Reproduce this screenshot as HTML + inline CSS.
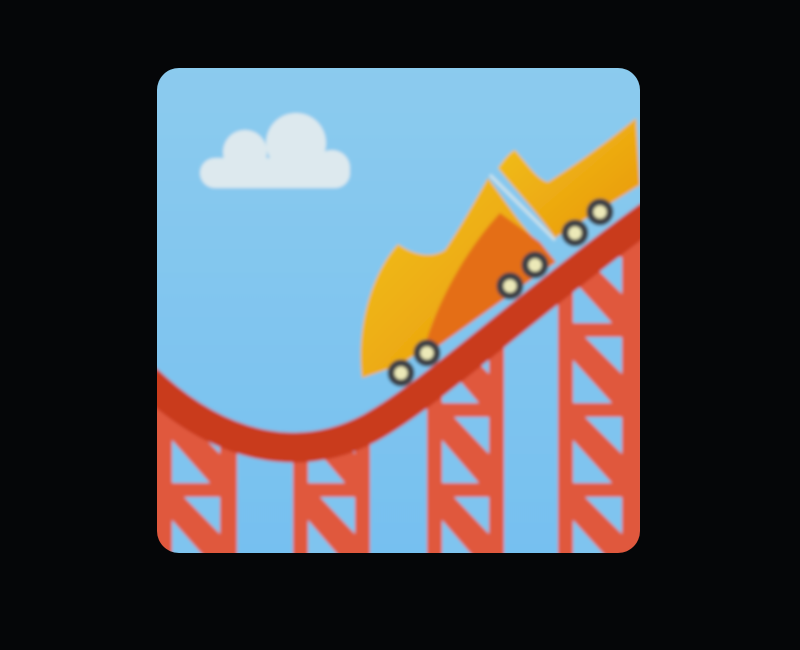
<!DOCTYPE html>
<html><head><style>html,body{margin:0;padding:0;background:#050608;width:800px;height:650px;overflow:hidden}</style></head>
<body>
<svg width="800" height="650" viewBox="0 0 800 650" xmlns="http://www.w3.org/2000/svg">
<defs>
<clipPath id="c"><rect x="157" y="68" width="483" height="485" rx="22"/></clipPath>
<clipPath id="below"><path d="M145,378 C220,450 300,465 370,428 C430,395 520,310 650,215 L660,570 L140,570 Z"/></clipPath>
<linearGradient id="sky" x1="0" y1="0" x2="0" y2="1"><stop offset="0" stop-color="#8ccbee"/><stop offset="1" stop-color="#76c0f0"/></linearGradient>
<linearGradient id="car" x1="0" y1="0" x2="1" y2="1"><stop offset="0" stop-color="#f2c21a"/><stop offset="1" stop-color="#e8960a"/></linearGradient>
<filter id="b"><feGaussianBlur stdDeviation="1.5"/></filter>
</defs>
<g clip-path="url(#c)" filter="url(#b)">
<rect x="150" y="60" width="500" height="500" fill="url(#sky)"/>
<!-- cloud -->
<g fill="#dde9ee">
<rect x="200" y="158" width="150" height="30" rx="15"/>
<circle cx="245" cy="152" r="22"/>
<circle cx="296" cy="143" r="30"/>
<circle cx="332" cy="168" r="18"/>
</g>
<!-- columns -->
<g clip-path="url(#below)">
<g fill="#e0583c">
<rect x="150" y="300" width="87" height="270"/>
<rect x="293" y="300" width="77" height="270"/>
<rect x="427" y="300" width="77" height="270"/>
<rect x="558" y="200" width="85" height="370"/>
</g>
<g fill="#7fc4ef">
<polygon points="184,337 220,337 220,374"/><polygon points="172,360 172,403 210,403"/>
<polygon points="184,417 220,417 220,454"/><polygon points="172,440 172,483 210,483"/>
<polygon points="184,497 220,497 220,534"/><polygon points="172,520 172,563 210,563"/>

<polygon points="320,417 355,417 355,454"/><polygon points="308,440 308,483 345,483"/>
<polygon points="320,497 355,497 355,534"/><polygon points="308,520 308,563 345,563"/>

<polygon points="454,337 489,337 489,374"/><polygon points="442,360 442,403 479,403"/>
<polygon points="454,417 489,417 489,454"/><polygon points="442,440 442,483 479,483"/>
<polygon points="454,497 489,497 489,534"/><polygon points="442,520 442,563 479,563"/>

<polygon points="585,257 622,257 622,294"/><polygon points="573,280 573,323 612,323"/>
<polygon points="585,337 622,337 622,374"/><polygon points="573,360 573,403 612,403"/>
<polygon points="585,417 622,417 622,454"/><polygon points="573,440 573,483 612,483"/>
<polygon points="585,497 622,497 622,534"/><polygon points="573,520 573,563 612,563"/>
</g>
</g>
<!-- track -->
<path d="M145,378 C220,450 300,465 370,428 C430,395 520,310 650,215" fill="none" stroke="#c93a1e" stroke-width="30"/>
<!-- lower car -->
<path d="M362,378 C356,330 370,275 398,244 C415,256 432,258 445,250 C462,225 478,195 488,178 C505,200 520,225 545,250 L555,262 L400,365 Z" fill="url(#car)"/>
<path d="M425,345 C440,295 470,245 500,213 L540,242 L556,262 L430,352 Z" fill="#e46e14"/>
<!-- upper car -->
<path d="M498,168 C505,158 510,152 515,150 C528,165 538,180 548,182 C575,165 610,140 636,118 L640,185 L555,238 C535,210 515,190 498,168 Z" fill="url(#car)"/>
<line x1="490" y1="175" x2="555" y2="240" stroke="#cfe3ea" stroke-width="3"/>
<!-- wheels -->
<g fill="#ece9b8" stroke="#3c4044" stroke-width="7">
<circle cx="401" cy="373" r="10"/><circle cx="427" cy="353" r="10"/>
<circle cx="510" cy="286" r="10"/><circle cx="535" cy="265" r="10"/>
<circle cx="575" cy="233" r="10"/><circle cx="600" cy="212" r="10"/>
</g>
</g>
</svg>
</body></html>
